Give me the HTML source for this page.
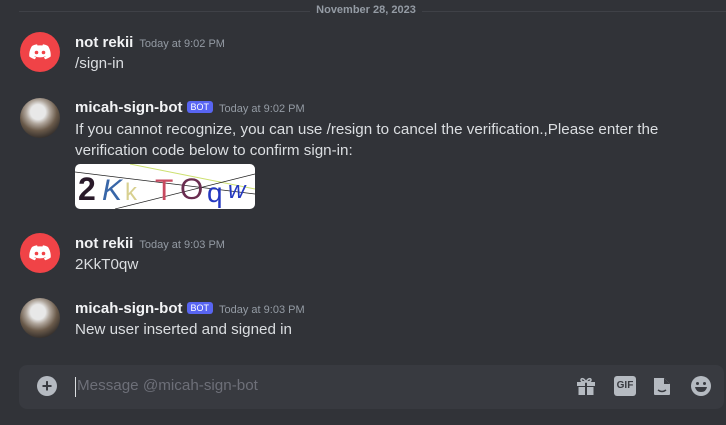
<!DOCTYPE html><html><head><style>
body{margin:0;width:726px;height:425px;background:#313338;font-family:"Liberation Sans",sans-serif;position:relative;overflow:hidden;color:#dbdee1}
.a{position:absolute}
.name{font-size:15px;font-weight:bold;color:#f2f3f5}
.ts{font-size:11px;color:#949ba4;margin-left:6px;font-weight:normal}
.txt{font-size:15.2px;color:#dbdee1;line-height:21px}
.bot{display:inline-block;background:#5865f2;color:#fff;font-size:9px;padding:1px 4px;border-radius:3px;margin-left:4px;vertical-align:2px;font-weight:normal}
.av{width:40px;height:40px;border-radius:50%;left:20px}
.dc{background:#f04347}
.duck{background:radial-gradient(circle at 45% 35%,#e8e8e8 0 22%,#b0a69c 35%,#6a5a4a 55%,#2e2a28 80%)}
</style></head><body>
<div class="a" style="left:19px;top:11px;width:291px;height:1px;background:#3f4147"></div>
<div class="a" style="left:422px;top:11px;width:304px;height:1px;background:#3f4147"></div>
<div class="a" style="left:310px;top:4px;width:112px;text-align:center;font-size:11px;color:#949ba4;font-weight:bold">November 28, 2023</div>

<div class="a av dc" style="top:32px"><svg width="40" height="40" viewBox="0 0 40 40"><path d="M12 14c2-1 4-1.5 5-1.7l.6 1.2c1.6-.2 3.2-.2 4.8 0l.6-1.2c1 .2 3 .7 5 1.7 2 3 3 6.5 2.7 10.5-2 1.5-4 2.3-5.6 2.7l-1.2-1.8 1.8-.9-.4-.3c-3.4 1.5-7.2 1.5-10.6 0l-.4.3 1.8.9-1.2 1.8c-1.6-.4-3.6-1.2-5.6-2.7-.3-4 .7-7.5 2.7-10.5z" fill="#fff"/><circle cx="16.5" cy="20.5" r="1.8" fill="#f04347"/><circle cx="23.5" cy="20.5" r="1.8" fill="#f04347"/></svg></div>
<div class="a name" style="left:75px;top:34px">not rekii<span class="ts">Today at 9:02 PM</span></div>
<div class="a txt" style="left:75px;top:53px">/sign-in</div>

<div class="a av duck" style="top:98px"></div>
<div class="a name" style="left:75px;top:99px">micah-sign-bot<span class="bot">BOT</span><span class="ts">Today at 9:02 PM</span></div>
<div class="a txt" style="left:75px;top:119px;width:640px">If you cannot recognize, you can use /resign to cancel the verification.,Please enter the verification code below to confirm sign-in:</div>
<div class="a" style="left:75px;top:164px;width:180px;height:45px;background:#fff;border-radius:5px;overflow:hidden">
<svg width="180" height="45"><line x1="0" y1="8" x2="180" y2="30" stroke="#222" stroke-width=".7"/><line x1="55" y1="0" x2="180" y2="25" stroke="#cde070" stroke-width="1"/><line x1="40" y1="45" x2="180" y2="10" stroke="#222" stroke-width=".7"/>
<text x="3" y="36" font-size="32" fill="#2a1a2a" font-weight="bold">2</text><text x="27" y="36" font-size="30" fill="#3866a8" font-style="italic">K</text><text x="50" y="36" font-size="24" fill="#d8d090">k</text><text x="80" y="36" font-size="30" fill="#c84a60">T</text><text x="105" y="35" font-size="30" fill="#6a2d50">O</text><text x="132" y="38" font-size="28" fill="#2438c0">q</text><text x="153" y="34" font-size="24" fill="#2438c0" font-style="italic">w</text></svg></div>

<div class="a av dc" style="top:233px"><svg width="40" height="40" viewBox="0 0 40 40"><path d="M12 14c2-1 4-1.5 5-1.7l.6 1.2c1.6-.2 3.2-.2 4.8 0l.6-1.2c1 .2 3 .7 5 1.7 2 3 3 6.5 2.7 10.5-2 1.5-4 2.3-5.6 2.7l-1.2-1.8 1.8-.9-.4-.3c-3.4 1.5-7.2 1.5-10.6 0l-.4.3 1.8.9-1.2 1.8c-1.6-.4-3.6-1.2-5.6-2.7-.3-4 .7-7.5 2.7-10.5z" fill="#fff"/><circle cx="16.5" cy="20.5" r="1.8" fill="#f04347"/><circle cx="23.5" cy="20.5" r="1.8" fill="#f04347"/></svg></div>
<div class="a name" style="left:75px;top:235px">not rekii<span class="ts">Today at 9:03 PM</span></div>
<div class="a txt" style="left:75px;top:254px">2KkT0qw</div>

<div class="a av duck" style="top:298px"></div>
<div class="a name" style="left:75px;top:300px">micah-sign-bot<span class="bot">BOT</span><span class="ts">Today at 9:03 PM</span></div>
<div class="a txt" style="left:75px;top:319px">New user inserted and signed in</div>

<div class="a" style="left:19px;top:365px;width:705px;height:44px;background:#383a40;border-radius:8px"></div>
<div class="a" style="left:37px;top:376px;width:20px;height:20px;border-radius:50%;background:#b5bac1;color:#383a40;font-weight:bold;font-size:18px;line-height:20px;text-align:center">+</div>
<div class="a" style="left:75px;top:377px;width:1px;height:20px;background:#dbdee1"></div>
<div class="a" style="left:77px;top:377px;font-size:15.2px;color:#6d6f78">Message @micah-sign-bot</div>
<svg class="a" style="left:575px;top:375px" width="22" height="22" viewBox="0 0 22 22"><rect x="2" y="7" width="18" height="4" fill="#b5bac1"/><rect x="3.5" y="12" width="15" height="8" fill="#b5bac1"/><rect x="10" y="7" width="2" height="13" fill="#383a40"/><path d="M11 7C9 3 6 3 6 5s3 2 5 2c2 0 5 0 5-2s-3-2-5 2" stroke="#b5bac1" stroke-width="1.6" fill="none"/></svg>
<div class="a" style="left:614px;top:376px;width:22px;height:20px;border-radius:3px;background:#b5bac1;color:#383a40;font-size:10px;font-weight:bold;line-height:20px;text-align:center">GIF</div>
<svg class="a" style="left:652px;top:375px" width="20" height="22" viewBox="0 0 20 22"><path d="M2 3h10l6 6v10a1 1 0 0 1-1 1H3a1 1 0 0 1-1-1z" fill="#b5bac1"/><path d="M12 3v6h6" fill="#383a40"/><path d="M6 15q4 3 8 0" stroke="#383a40" stroke-width="1.5" fill="none"/></svg>
<svg class="a" style="left:690px;top:375px" width="22" height="22" viewBox="0 0 22 22"><circle cx="11" cy="11" r="10" fill="#b5bac1"/><circle cx="7.5" cy="8.5" r="1.5" fill="#383a40"/><circle cx="14.5" cy="8.5" r="1.5" fill="#383a40"/><path d="M5 12h12q-1 5-6 5t-6-5z" fill="#383a40"/></svg>
</body></html>
